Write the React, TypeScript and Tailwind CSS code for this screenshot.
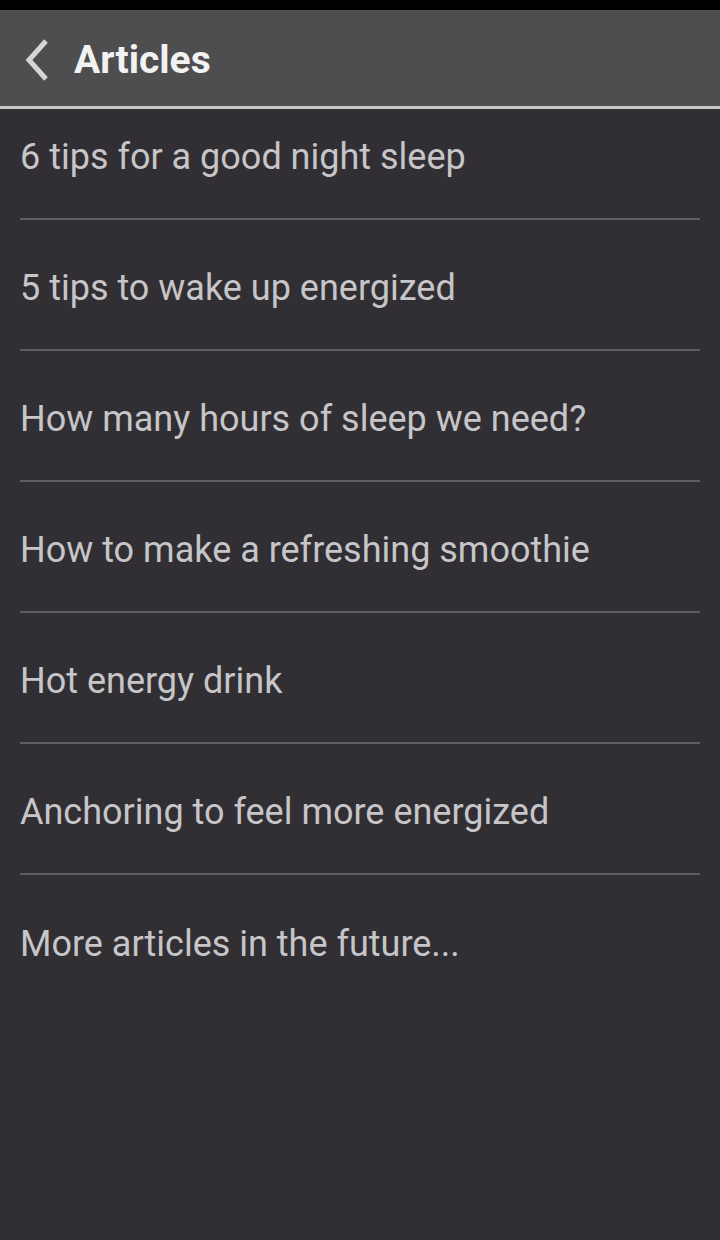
import React from "react";

const items = [
  "6 tips for a good night sleep",
  "5 tips to wake up energized",
  "How many hours of sleep we need?",
  "How to make a refreshing smoothie",
  "Hot energy drink",
  "Anchoring to feel more energized",
];

export default function App() {
  return (
    <div
      className="w-[720px] h-[1240px] bg-[#312f33] flex flex-col overflow-hidden"
      style={{ fontFamily: "Roboto, 'Noto Sans', sans-serif" }}
    >
      <div className="h-[10px] bg-black shrink-0" />
      <div className="h-[96px] bg-[#4e4d50] flex items-center shrink-0 pt-[4px]">
        <svg width="30" height="46" viewBox="0 0 30 46" className="ml-[22px]">
          <path d="M24 4 L7 23 L24 42" fill="none" stroke="#d6d6d6" strokeWidth="5" strokeLinecap="butt" />
        </svg>
        <span className="ml-[22px] text-[39px] font-bold text-[#f2f2f2] leading-none">Articles</span>
      </div>
      <div className="h-[3px] bg-[#c9c9c9] shrink-0" />
      <div className="flex flex-col">
        {items.map((t, i) => (
          <div
            key={i}
            className={`mx-[20px] border-b-2 border-[#5e5d60] flex items-center ${i === 0 ? "h-[111px] pb-[13px]" : "h-[131px] pt-[6px]"}`}
          >
            <span className="text-[36px] text-[#c6c5c8] leading-none">{t}</span>
          </div>
        ))}
        <div className="mx-[20px] h-[131px] pt-[6px] flex items-center">
          <span className="text-[36px] text-[#c6c5c8] leading-none">More articles in the future...</span>
        </div>
      </div>
    </div>
  );
}
